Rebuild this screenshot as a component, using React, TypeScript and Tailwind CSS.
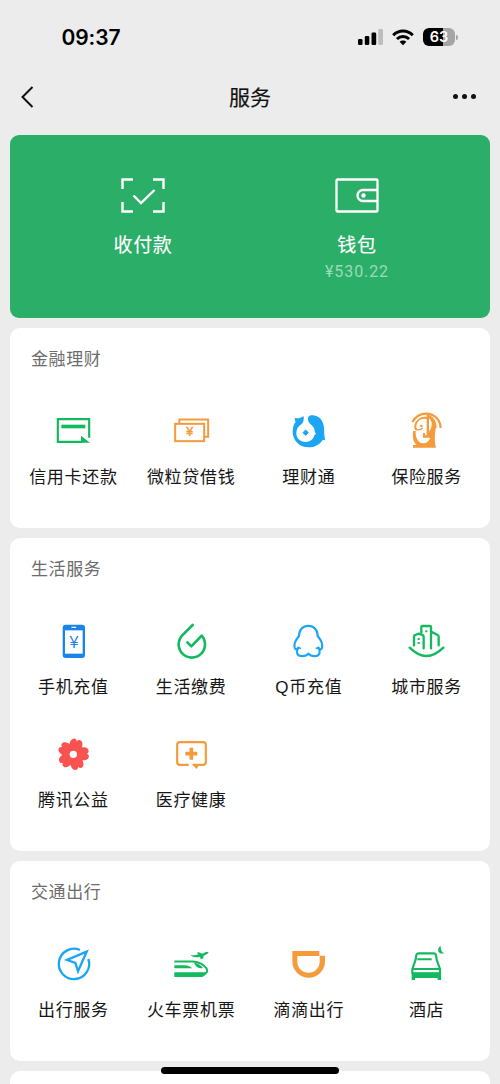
import type { ReactNode } from "react";

const GREEN = "#12b95f";
const ORANGE = "#f59b3c";
const BLUE = "#1aa5f5";

type Service = { label: string; icon: ReactNode };

// every service icon is drawn on the same 120 unit square
function Glyph({ children }: { children: ReactNode }) {
  return (
    <svg className="block h-10 w-10" viewBox="0 0 120 120" fill="none">
      {children}
    </svg>
  );
}

const finance: Service[] = [
  {
    label: "信用卡还款",
    icon: (
      <Glyph>
        <path d="M88 92.5H14.5V24.5H108.5V80" stroke={GREEN} strokeWidth="6.5" />
        <rect x="25" y="41" width="72" height="11" fill={GREEN} />
        <path d="M84 74L111 95.5H84Z" fill={GREEN} />
      </Glyph>
    ),
  },
  {
    label: "微粒贷借钱",
    icon: (
      <Glyph>
        <rect x="12.5" y="38.5" width="87" height="52" stroke={ORANGE} strokeWidth="6" />
        <path d="M25 36V25.5H111.5V77H101" stroke={ORANGE} strokeWidth="6" />
        <text x="56" y="76" textAnchor="middle" fontFamily="Liberation Sans" fontSize="37" fill={ORANGE} stroke={ORANGE} strokeWidth="1.5">¥</text>
      </Glyph>
    ),
  },
  {
    label: "理财通",
    icon: (
      <Glyph>
        <path
          d="M20 20C28 24 36 22 47 16C48 26 47 34 41 39C31 45 25 54 25 66C25 82 37 93 52 93C67 93 77 84 79 73L84 68L80 62C80 50 74 46 68 40C57 30 57 15 69 13C92 11 105 28 107 44C110 58 107 70 112 88L104 86C96 100 80 109 62 109C34 109 14 88 14 62C14 48 18 38 23 33C21 29 20 24 20 20Z"
          fill={BLUE}
        />
        <path d="M53 57L61 65L53 73L45 65Z" fill={BLUE} stroke={BLUE} strokeWidth="3" strokeLinejoin="round" />
      </Glyph>
    ),
  },
  {
    label: "保险服务",
    icon: (
      <Glyph>
        <path d="M19 33C31 13 48 7 64 8C86 10 103 27 104 51" stroke={ORANGE} strokeWidth="6.5" />
        <path d="M62 10C82 15 91 29 92 49L89 53C85 78 86 93 90 110H21V102H32C23 94 19 83 21 60H29C28 80 36 96 50 97C62 97 70 90 72 80H51V66H57V73H62Z" fill={ORANGE} />
        <path d="M69 22C78 29 82 44 69 62Z" fill="#fff" />
        <path d="M63 21C44 18 31 28 28 44C27 51 28 54 32 56" stroke={ORANGE} strokeWidth="6" />
        <path d="M29 55C37 58 44 58 50 51" stroke={ORANGE} strokeWidth="3.5" />
        <circle cx="46" cy="45" r="4" fill={ORANGE} />
      </Glyph>
    ),
  },
];

const life: Service[] = [
  {
    label: "手机充值",
    icon: (
      <Glyph>
        <rect x="29" y="11" width="67" height="100" rx="9" fill="#1b84ea" />
        <rect x="36" y="28" width="53" height="70" fill="#fff" />
        <rect x="55" y="17" width="15" height="4" rx="2" fill="#fff" />
        <text x="63" y="81" textAnchor="middle" fontFamily="Liberation Sans" fontSize="48" fill="#1b84ea">¥</text>
      </Glyph>
    ),
  },
  {
    label: "生活缴费",
    icon: (
      <Glyph>
        <path d="M65 12L33 44A39.5 39.5 0 1 0 92 44L61 76L49 64" stroke={GREEN} strokeWidth="8" strokeLinecap="round" strokeLinejoin="round" />
      </Glyph>
    ),
  },
  {
    label: "Q币充值",
    icon: (
      <Glyph>
        <path
          d="M33 45C33 26 45 14.5 61 14.5C77 14.5 89 26 89 45C99 57 105 72 102 81C100 87 96 86 91 80C98 91 96 103 84 105C76 106 66 104 61 98C56 104 46 106 38 105C26 103 24 91 31 80C26 86 22 87 20 81C17 72 23 57 33 45Z"
          stroke={BLUE}
          strokeWidth="6.5"
          strokeLinejoin="round"
        />
        <path d="M31 80L37 82M91 80L85 82" stroke={BLUE} strokeWidth="5" strokeLinecap="round" />
      </Glyph>
    ),
  },
  {
    label: "城市服务",
    icon: (
      <Glyph>
        <g stroke={GREEN} strokeWidth="7" strokeLinecap="round" strokeLinejoin="round">
          <path d="M11 80Q61 130 112 80" />
          <path d="M24 73V47Q24 43 28 42L38 38L49 42Q53 43 53 48V82" />
          <path d="M46 36V18Q46 15 49 15H72Q75 15 75 18V82M75 32L95 42Q98 43 98 47V73" />
        </g>
        <path d="M35 51H41V57H35ZM35 63H41V69H35ZM58 28H64V34H58Z" fill={GREEN} />
      </Glyph>
    ),
  },
  {
    label: "腾讯公益",
    icon: (
      <Glyph>
        {[15, 87, 159, 231, 303].map((angle) => (
          <path
            key={angle}
            transform={`rotate(${angle} 61 61)`}
            d="M61 66C41 54 36 24 48 16C54 13 59 15 61 21C63 15 68 13 74 16C86 24 81 54 61 66Z"
            fill="#fa5151"
          />
        ))}
        <circle cx="61" cy="61" r="11" fill="#fff" />
      </Glyph>
    ),
  },
  {
    label: "医疗健康",
    icon: (
      <Glyph>
        <path d="M53 92.5H27Q18.5 92.5 18.5 84V33Q18.5 24.5 27 24.5H96Q104.5 24.5 104.5 33V84Q104.5 92.5 96 92.5H66" stroke={ORANGE} strokeWidth="6.5" />
        <path d="M62 90H86L77 105Z" fill={ORANGE} />
        <path d="M61 41V77M43 59H79" stroke={ORANGE} strokeWidth="11" />
      </Glyph>
    ),
  },
];

const travel: Service[] = [
  {
    label: "出行服务",
    icon: (
      <Glyph>
        <path d="M81 18A45.5 45.5 0 1 0 106 45" stroke={BLUE} strokeWidth="7" />
        <path d="M101 23L42 48L67 57L75 82Z" stroke={BLUE} strokeWidth="7" />
      </Glyph>
    ),
  },
  {
    label: "火车票机票",
    icon: (
      <Glyph>
        <path d="M10 52.5H66C83 54 99 63 107 74C112 82 106 91 94 91" stroke={GREEN} strokeWidth="6" />
        <path d="M10 64H42C52 65 58 68 63 73H10ZM10 85H107C103 95 98 99 91 99H10ZM69 56C83 58 90 64 96 72C84 75 75 69 69 56Z" fill={GREEN} />
        <path d="M58 32C64 34 69 35 75 33L83 31L77 26L83 25L95 29C101 25 107 23 113 25C110 31 102 34 98 35L97 43L89 46L87 38C76 41 66 40 58 32Z" fill={GREEN} />
      </Glyph>
    ),
  },
  {
    label: "滴滴出行",
    icon: (
      <Glyph>
        <path d="M13 21H94V35H111V52A49 49 0 0 1 13 52ZM28 36V53A33 33 0 0 0 95 53V36Z" fill={ORANGE} fillRule="evenodd" />
      </Glyph>
    ),
  },
  {
    label: "酒店",
    icon: (
      <Glyph>
        <path d="M29 47L31 33Q32 28 37 28H84Q89 28 90 33L92 47L102 75V88H19V75Z" stroke={GREEN} strokeWidth="6.5" strokeLinejoin="round" />
        <path d="M34 46H77M20 75H101" stroke={GREEN} strokeWidth="6" />
        <path d="M17 86H105V108H95V102H27V108H17Z" fill={GREEN} />
        <path d="M104 5C91 14 95 33 115 28C107 24 103 16 104 5Z" fill={GREEN} />
      </Glyph>
    ),
  },
];

function StatusBar() {
  return (
    <div className="flex h-[60px] items-start justify-between pl-[61.5px] pr-[42px] pt-[24px]">
      <span className="font-[Inter] text-[21px] font-semibold leading-[27px] tracking-[-0.1px] text-black">09:37</span>
      <div className="flex h-[26px] items-center">
        <svg className="h-4 w-[26px]" viewBox="0 0 26 16">
          <rect x="0" y="10" width="4.5" height="6" rx="1.3" />
          <rect x="6.8" y="7" width="4.5" height="9" rx="1.3" />
          <rect x="13.5" y="3.5" width="4.7" height="12.5" rx="1.3" />
          <rect x="20.3" y="0" width="4.7" height="16" rx="1.3" fill="#bdbdbd" />
        </svg>
        <svg className="ml-2 h-[17px] w-[22px]" viewBox="0 0 22 17" fill="none" stroke="#000" strokeWidth="3">
          <path d="M1.2 6.2C6.8 .7 15.2 .7 20.8 6.2" />
          <path d="M4.9 10C8.5 6.6 13.5 6.6 17.1 10" />
          <path d="M11 16.2L7.6 12.8C9.5 11 12.5 11 14.4 12.8Z" fill="#000" stroke="none" />
        </svg>
        <div className="ml-[9px] flex h-[18px] w-8 items-center justify-center rounded-[6px] bg-[linear-gradient(90deg,#000_64%,#a5a5a5_64%)] font-[Inter] text-[14.5px] font-semibold leading-none text-white">
          63
        </div>
        <span className="ml-px h-[5px] w-[2px] rounded-r-full bg-[#a5a5a5]" />
      </div>
    </div>
  );
}

function NavBar() {
  return (
    <div className="grid h-[73px] grid-cols-3 items-center">
      <svg className="ml-5 h-6 w-4" viewBox="0 0 16 24" fill="none" stroke="#111" strokeWidth="2">
        <path d="M12.5 2L2.5 12L12.5 22" />
      </svg>
      <h1 className="text-center text-[21px] font-normal leading-none text-[#111] [-webkit-text-stroke:0.2px]">服务</h1>
      <div className="mr-6 flex justify-end gap-1">
        <i className="size-[5px] rounded-full bg-[#111]" />
        <i className="size-[5px] rounded-full bg-[#111]" />
        <i className="size-[5px] rounded-full bg-[#111]" />
      </div>
    </div>
  );
}

function PayCard() {
  return (
    <section className="grid h-[183px] grid-cols-2 rounded-[9px] bg-[#2bae67] px-[26px] pt-[42px] text-white">
      <div className="flex flex-col items-center">
        <svg className="h-[37px] w-11" viewBox="0 0 44 37" fill="none" stroke="#fff" strokeWidth="2.4">
          <path d="M1.5 12V2.5H12M32 2.5H42.5V12M42.5 25V34.5H32M12 34.5H1.5V25" />
          <path d="M12.5 18.5L20 26L33.5 13" />
        </svg>
        <span className="mt-[18px] text-[19px] leading-6 tracking-[0.7px] [-webkit-text-stroke:0.15px]">收付款</span>
      </div>
      <div className="flex flex-col items-center">
        <svg className="h-[37px] w-11" viewBox="0 0 44 37" fill="none" stroke="#fff" strokeWidth="2.3">
          <rect x="1.5" y="2.5" width="41" height="32" rx="1" />
          <path d="M42.5 13H28A5.5 5.5 0 0 0 28 24H42.5" />
          <circle cx="28.5" cy="18.5" r="2.2" fill="#fff" stroke="none" />
        </svg>
        <span className="mt-[18px] text-[19px] leading-6 tracking-[0.7px] [-webkit-text-stroke:0.15px]">钱包</span>
        <span className="mt-[5.5px] font-[Roboto] text-[16px] leading-5 tracking-[0.9px] text-[#9bdbb7]">¥530.22</span>
      </div>
    </section>
  );
}

function ServiceCard({ title, items }: { title: string; items: Service[] }) {
  return (
    <section className="rounded-[10px] bg-white pb-[38px] pt-[18px]">
      <h2 className="ml-[21px] text-[17px] leading-6 tracking-[0.6px] text-[#6c6c6c]">{title}</h2>
      <div className="mt-[41px] grid grid-cols-4 gap-y-[34px] pl-1 pr-[5px]">
        {items.map((item) => (
          <div key={item.label} className="flex h-[79px] flex-col items-center">
            {item.icon}
            <span className="ml-px mt-[15px] whitespace-nowrap font-['Liberation_Sans','Noto_Sans_CJK_SC',sans-serif] text-[17px] leading-6 tracking-[0.7px] text-[#161616]">
              {item.label}
            </span>
          </div>
        ))}
      </div>
    </section>
  );
}

export default function App() {
  return (
    <div className="relative h-[1084px] w-[500px] overflow-hidden bg-[#ececec] font-['Noto_Sans_CJK_SC',sans-serif]">
      <StatusBar />
      <NavBar />
      <main className="flex flex-col gap-2.5 px-2.5 pt-0.5">
        <PayCard />
        <ServiceCard title="金融理财" items={finance} />
        <ServiceCard title="生活服务" items={life} />
        <ServiceCard title="交通出行" items={travel} />
        <section className="h-10 rounded-[10px] bg-white" />
      </main>
      <div className="absolute bottom-[10px] left-[161px] h-[7px] w-[178px] rounded-full bg-black" />
    </div>
  );
}
